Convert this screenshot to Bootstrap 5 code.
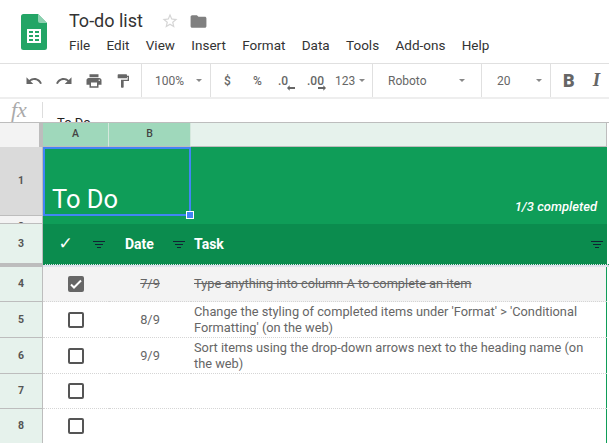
<!DOCTYPE html>
<html lang="en">
<head>
<meta charset="utf-8">
<title>To-do list</title>
<link href="https://cdn.jsdelivr.net/npm/bootstrap@5.3.0/dist/css/bootstrap.min.css" rel="stylesheet">
<style>
html,body{width:609px;height:443px;overflow:hidden;background:#fff;font-family:Roboto,"Liberation Sans",sans-serif;color:#333}
.appbar{height:63px;padding-left:21px}
.logo-box{width:48px;padding-top:14px}
.doc-title{font-size:18px;line-height:22px;padding-top:10px;color:#333;gap:14px}
.folder-ic{margin-left:-4px}
.menu-bar{font-size:13.5px;line-height:18px;margin-top:4px;color:#333}
.menu-bar span{margin-right:16.35px}
.tool-strip{height:36px;border-top:1px solid #e0e0e0;border-bottom:2px solid #eee;font-size:12px;color:#666;overflow:hidden}
.tgroup{height:100%;border-right:1px solid #e0e0e0;flex:none;position:relative}
.tgroup svg{fill:#666;flex:none}
.caret{width:0;height:0;border-left:3px solid transparent;border-right:3px solid transparent;border-top:3px solid #888;flex:none}
.g1{width:142px;padding-left:25px;gap:12px}
.g2{width:69px;padding-left:13px}
.g3{width:162px;padding-left:13px}
.g4{width:109px;padding-left:15px}
.g5{width:69px;padding-left:15px}
.g6{border-right:0;padding-left:12px;gap:18px}
.w-dollar{width:29px}
.w-pct{width:25px}
.w-d1{width:29px}
.w-d2{width:28px}
.dec{position:relative;display:inline-block;font-weight:500;line-height:12px}
.dec svg{position:absolute;top:10px}
.dec-a svg{left:9px}
.dec-b svg{left:11px}
.bold-b{font-size:18px;font-weight:900}
.ital-i{font-family:"Liberation Serif",serif;font-size:19px;font-weight:700;font-style:italic}
.fx-bar{height:24px;border-bottom:1px solid #bdbdbd;overflow:hidden}
.fx-mark{width:42px;font-family:"Liberation Serif",serif;font-style:italic;font-size:22px;line-height:22px;color:#aaa;padding-left:11px}
.fx-sep{width:1px;height:16px;background:#ddd;margin-top:3px}
.fx-val{font-size:13px;padding-left:14px;padding-top:16px;line-height:15px;color:#222}
.sheet{position:relative;display:grid;grid-template-columns:43px 66px 82px 416px 2px;grid-template-rows:24px 69px 8px 40px 3px 35px 36px 36px 35px 35px;font-size:12.8px;color:#666}
.hd{display:flex;align-items:center;justify-content:center;font-size:10.5px;font-weight:700;color:#555;background:#e6f2ec;border-right:1px solid #bdbdbd;border-bottom:1px solid #bdbdbd;overflow:hidden}
.corner{background:#f3f3f3;border-right:4px solid #bdbdbd;border-bottom:0}
.hd-on{background:#9fd8bb;border-bottom:1px solid #bdbdbd;border-right:1px solid #d5e8dd;color:#444;font-weight:500;padding-bottom:1px}
.hd-off{background:#e6f2ec;border-right:1px solid #bdbdbd}
.hd-sel{background:#dadada}
.hd-r2{align-items:flex-start;padding-top:3px;background:#f3f3f3}
.band{background:#0f9d58;color:#fff}
.big-t{grid-column:2/4;font-size:25.5px;line-height:30px;padding:0 0 2px 9px;display:flex;align-items:flex-end;font-weight:400}
.done-n{font-style:italic;font-weight:500;font-size:13px;display:flex;align-items:flex-end;justify-content:flex-end;padding:0 10px 0 0}
.band2{grid-column:2/5}
.band3{background:#0b8c4e;color:#fff;font-size:14px;font-weight:700;display:flex;align-items:center}
.chk-col{position:relative;justify-content:center}
.chk-mark{font-family:"DejaVu Sans",sans-serif;font-size:17px;font-weight:700;margin-left:-21px}
.filt-a{position:absolute;left:50px;top:17px}
.date-l{margin-left:16px}
.filt-b{margin-left:19px;margin-top:1px}
.task-l{margin-left:3px}
.filt-c{margin-left:auto;margin-right:4px;margin-top:1px}
.blank{background:#fff}
.fr-hd{background:#bdbdbd}
.fr-b{grid-column:2/6;background:#dfe3ec;border-top:1px dotted #0b8c4e}
.cell{display:flex;align-items:center;border-bottom:1px dotted #d5d5d5;background:#fff;line-height:16px;overflow:hidden}
.cc{justify-content:center}
.tx{padding-left:3px;padding-right:8px}
.tx-end{border-right:2px solid #0f9d58;margin-right:-1px}
.gone{background:#f3f3f3;text-decoration:line-through}
.tick{width:16px;height:16px;border:2px solid #555;border-radius:2px;display:flex;align-items:center;justify-content:center;background:#fff}
.tick-on{background:#666;border-color:#666}
.sel-box{position:absolute;left:43px;top:24px;width:148px;height:69px;border:2px solid #4285f4;pointer-events:none}
.sel-dot{position:absolute;right:-5px;bottom:-5px;width:8px;height:8px;background:#4285f4;border:1px solid #fff}
</style>
</head>
<body>
<div class="d-flex appbar">
  <div class="logo-box">
    <svg width="26" height="36" viewBox="0 0 26 36"><path d="M2.500 0H17l9 9v24.500a2.500 2.500 0 0 1-2.500 2.500h-21A2.500 2.500 0 0 1 0 33.500v-31A2.500 2.500 0 0 1 2.500 0z" fill="#23a566"/><path d="M17 0l9 9h-7a2 2 0 0 1-2-2z" fill="#8ed1b1"/><path d="M6 15h14v14H6z" fill="#fff"/><path d="M8 17h4v2H8zM14 17h4v2h-4zM8 21h4v2H8zM14 21h4v2h-4zM8 25h4v2H8zM14 25h4v2h-4z" fill="#23a566"/></svg>
  </div>
  <div>
    <div class="d-flex align-items-center doc-title">
      <span>To-do list</span>
      <svg width="18" height="18" viewBox="0 0 24 24" fill="#d5d5d5" class="ms-1"><path d="M22 9.240l-7.190-.62L12 2 9.190 8.630 2 9.240l5.460 4.730L5.820 21 12 17.270 18.180 21l-1.630-7.030L22 9.240zM12 15.400l-3.760 2.270 1-4.280-3.320-2.880 4.380-.38L12 6.100l1.710 4.040 4.380.38-3.320 2.880 1 4.280L12 15.400z"/></svg>
      <svg width="19" height="19" viewBox="0 0 24 24" fill="#808080" class="folder-ic"><path d="M10 4H4c-1.100 0-1.990.9-1.990 2L2 18c0 1.100.9 2 2 2h16c1.100 0 2-.9 2-2V8c0-1.100-.9-2-2-2h-8l-2-2z"/></svg>
    </div>
    <div class="menu-bar d-flex"><span>File</span><span>Edit</span><span>View</span><span>Insert</span><span>Format</span><span>Data</span><span>Tools</span><span>Add-ons</span><span>Help</span></div>
  </div>
</div>
<div class="tool-strip d-flex">
  <div class="tgroup g1 d-flex align-items-center">
    <svg width="18" height="18" viewBox="0 0 24 24"><path d="M12.500 8c-2.650 0-5.050.99-6.900 2.600L2 7v9h9l-3.620-3.620c1.390-1.160 3.160-1.880 5.120-1.880 3.540 0 6.550 2.310 7.600 5.500l2.370-.78C21.080 11.030 17.150 8 12.500 8z"/></svg>
    <svg width="18" height="18" viewBox="0 0 24 24"><path d="M18.400 10.600C16.550 8.990 14.150 8 11.500 8c-4.650 0-8.580 3.030-9.960 7.220L3.900 16c1.050-3.190 4.050-5.500 7.600-5.500 1.950 0 3.730.72 5.120 1.880L13 16h9V7l-3.600 3.600z"/></svg>
    <svg width="18" height="18" viewBox="0 0 24 24"><path d="M19 8H5c-1.660 0-3 1.340-3 3v6h4v4h12v-4h4v-6c0-1.660-1.340-3-3-3zm-3 11H8v-5h8v5zm3-7c-.55 0-1-.45-1-1s.45-1 1-1 1 .45 1 1-.45 1-1 1zm-1-9H6v4h12V3z"/></svg>
    <svg width="16" height="18" viewBox="0 0 24 24"><path d="M18 4V3c0-.55-.45-1-1-1H5c-.55 0-1 .45-1 1v4c0 .55.45 1 1 1h12c.55 0 1-.45 1-1V6h1v4H9v11c0 .55.45 1 1 1h2c.55 0 1-.45 1-1v-9h8V4h-3z"/></svg>
  </div>
  <div class="tgroup g2 d-flex align-items-center"><span>100%</span><i class="caret ms-auto me-2"></i></div>
  <div class="tgroup g3 d-flex align-items-center">
    <span class="fw-medium w-dollar">$</span>
    <span class="fw-medium w-pct">%</span>
    <span class="dec dec-a w-d1">.0<svg width="8" height="6" viewBox="0 0 9 6"><path d="M0 3l3-3v2h6v2H3v2z"/></svg></span>
    <span class="dec dec-b w-d2">.00<svg width="8" height="6" viewBox="0 0 9 6"><path d="M9 3L6 0v2H0v2h6v2z"/></svg></span>
    <span>123</span><i class="caret ms-1"></i>
  </div>
  <div class="tgroup g4 d-flex align-items-center"><span>Roboto</span><i class="caret ms-auto me-3"></i></div>
  <div class="tgroup g5 d-flex align-items-center"><span>20</span><i class="caret ms-auto me-2"></i></div>
  <div class="tgroup g6 d-flex align-items-center">
    <span class="bold-b">B</span>
    <span class="ital-i">I</span>
  </div>
</div>
<div class="fx-bar d-flex">
  <div class="fx-mark">fx</div>
  <div class="fx-sep"></div>
  <div class="fx-val">To Do</div>
</div>
<div class="sheet">
  <div class="hd corner"></div>
  <div class="hd hd-on">A</div>
  <div class="hd hd-on">B</div>
  <div class="hd hd-off"></div>
  <div class="blank"></div>

  <div class="hd hd-sel">1</div>
  <div class="band big-t">To Do</div>
  <div class="band done-n">1/3 completed</div>
  <div class="blank"></div>

  <div class="hd hd-r2">2</div>
  <div class="band band2"></div>
  <div class="blank"></div>

  <div class="hd">3</div>
  <div class="band3 chk-col"><span class="chk-mark">✓</span><svg class="filt-a" width="12" height="7" viewBox="0 0 12 7"><path d="M0 0h12v1H0zM2 3h8v1H2zM4 6h4v1H4z" fill="#123"/></svg></div>
  <div class="band3"><span class="date-l">Date</span><svg class="filt-b" width="12" height="7" viewBox="0 0 12 7"><path d="M0 0h12v1H0zM2 3h8v1H2zM4 6h4v1H4z" fill="#123"/></svg></div>
  <div class="band3"><span class="task-l">Task</span><svg class="filt-c" width="12" height="7" viewBox="0 0 12 7"><path d="M0 0h12v1H0zM2 3h8v1H2zM4 6h4v1H4z" fill="#123"/></svg></div>
  <div class="blank"></div>

  <div class="fr-hd"></div>
  <div class="fr-b"></div>

  <div class="hd">4</div>
  <div class="cell cc gone"><span class="tick tick-on"><svg width="12" height="10" viewBox="0 0 12 10"><path d="M1 5.500l3 3 7-7" fill="none" stroke="#fff" stroke-width="2"/></svg></span></div>
  <div class="cell cc gone">7/9</div>
  <div class="cell tx tx-end gone">Type anything into column A to complete an item</div>
  <div class="blank"></div>

  <div class="hd">5</div>
  <div class="cell cc"><span class="tick"></span></div>
  <div class="cell cc">8/9</div>
  <div class="cell tx tx-end">Change the styling of completed items under 'Format' &gt; 'Conditional Formatting' (on the web)</div>
  <div class="blank"></div>

  <div class="hd">6</div>
  <div class="cell cc"><span class="tick"></span></div>
  <div class="cell cc">9/9</div>
  <div class="cell tx tx-end">Sort items using the drop-down arrows next to the heading name (on the web)</div>
  <div class="blank"></div>

  <div class="hd">7</div>
  <div class="cell cc"><span class="tick"></span></div>
  <div class="cell"></div>
  <div class="cell tx-end"></div>
  <div class="blank"></div>

  <div class="hd">8</div>
  <div class="cell cc"><span class="tick"></span></div>
  <div class="cell"></div>
  <div class="cell tx-end"></div>
  <div class="blank"></div>

  <div class="sel-box"><div class="sel-dot"></div></div>
</div>
<script src="https://cdn.jsdelivr.net/npm/bootstrap@5.3.0/dist/js/bootstrap.bundle.min.js"></script>
</body>
</html>
